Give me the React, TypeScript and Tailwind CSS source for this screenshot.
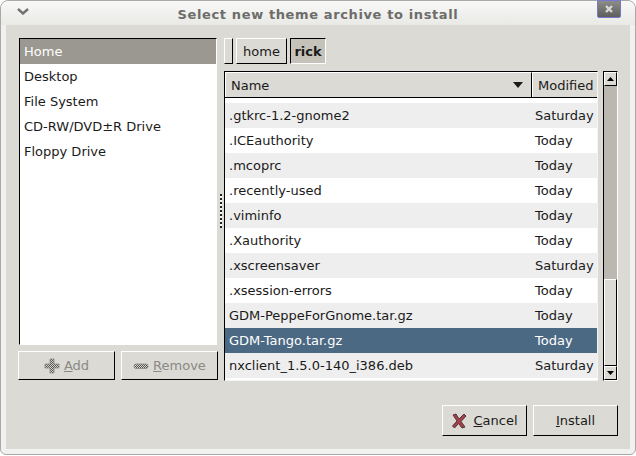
const F = "[font-family:'DejaVu_Sans',sans-serif]";

const rows: [string, string, string][] = [
  [".gtkrc-1.2-gnome2", "Saturday", "odd"],
  [".ICEauthority", "Today", "even"],
  [".mcoprc", "Today", "odd"],
  [".recently-used", "Today", "even"],
  [".viminfo", "Today", "odd"],
  [".Xauthority", "Today", "even"],
  [".xscreensaver", "Saturday", "odd"],
  [".xsession-errors", "Today", "even"],
  ["GDM-PeppeForGnome.tar.gz", "Today", "odd"],
  ["GDM-Tango.tar.gz", "Today", "sel"],
  ["nxclient_1.5.0-140_i386.deb", "Saturday", "odd"],
];

const places = ["Desktop", "File System", "CD-RW/DVD±R Drive", "Floppy Drive"];

function Dither() {
  return (
    <defs>
      <pattern id="dith" width="2" height="2" patternUnits="userSpaceOnUse">
        <rect width="2" height="2" fill="#d8d6d1" />
        <rect width="1" height="1" fill="#55534f" />
        <rect x="1" y="1" width="1" height="1" fill="#55534f" />
      </pattern>
    </defs>
  );
}

function Raised({ className, children }: { className: string; children?: React.ReactNode }) {
  return (
    <div className={"flex items-center justify-center border border-t-white border-l-white border-r-black border-b-black bg-[#dcdad5] " + className}>
      {children}
    </div>
  );
}

export default function App() {
  return (
    <div className="w-[636px] h-[456px] bg-white overflow-hidden font-['DejaVu_Sans',sans-serif] text-[13px] leading-none text-[#1a1a1a]">
      <div className="relative w-full h-[455px] bg-[#f1f1ef] rounded-t-[8px] rounded-b-[6px] border border-[#a9a9a7] flex flex-col">
        <div className="h-[24px] shrink-0 bg-gradient-to-b from-[#f8f8f7] to-[#e9e9e6] rounded-t-[8px] flex items-center justify-center">
          <span className="font-bold text-[13px] text-[#6c6c6a] tracking-[0.62px] pt-[2px]">Select new theme archive to install</span>
        </div>
        <svg className="absolute left-[16px] top-[7px]" width="12" height="7" viewBox="0 0 12 7">
          <path d="M1 1 L6 5.5 L11 1" fill="none" stroke="#73736f" strokeWidth="2.4" />
        </svg>
        <div className="absolute left-[596px] top-[-1px] w-[24px] h-[18px] bg-gradient-to-b from-[#8c8c88] to-[#5f5f5c] border border-[#77c] border-[#6a6a67] rounded-b-[2px] flex items-center justify-center">
          <svg width="10" height="10" viewBox="0 0 10 10">
            <path d="M2 2 L8 8 M8 2 L2 8" stroke="#d8d8d6" strokeWidth="2.4" />
          </svg>
        </div>

        <div className="ml-[5px] mr-[5px] h-[424px] bg-[#dcdad5] flex flex-col pl-[12px] pr-[12px] pt-[13px]">
          <div className="flex h-[343px]">
            <div className="w-[200px] shrink-0 flex flex-col">
              <div className="mx-[1px] h-[307px] bg-white border border-t-black border-l-black border-r-white border-b-white">
                <div className="h-[25px] bg-[#9a9890] text-white flex items-center pl-[4px]">Home</div>
                {places.map((p) => (
                  <div key={p} className="h-[25px] flex items-center pl-[4px]">{p}</div>
                ))}
              </div>
              <div className="flex justify-between mt-[6px]">
                <Raised className="w-[97px] h-[29px] gap-[4px] text-[#8a8984]">
                  <svg width="16" height="16" viewBox="0 0 16 16">
                    <Dither />
                    <path d="M6 1 H10 V6 H15 V10 H10 V15 H6 V10 H1 V6 H6 Z" fill="url(#dith)" stroke="#8a8984" strokeWidth="0.8" strokeLinejoin="round" />
                  </svg>
                  <span><u>A</u>dd</span>
                </Raised>
                <Raised className="w-[97px] h-[29px] gap-[4px] text-[#8a8984]">
                  <svg width="16" height="16" viewBox="0 0 16 16">
                    <rect x="1" y="6" width="14" height="4.5" rx="2" fill="url(#dith)" stroke="#8a8984" strokeWidth="0.8" />
                  </svg>
                  <span><u>R</u>emove</span>
                </Raised>
              </div>
            </div>

            <div className="relative w-[6px] shrink-0">
              <div className="absolute left-[2px] top-[156px] w-[2px] h-[34px] bg-[repeating-linear-gradient(to_bottom,#222_0,#222_2px,#f5f5f5_2px,#f5f5f5_4px)]" />
            </div>

            <div className="w-[394px] shrink-0 flex flex-col">
              <div className="flex h-[26px] gap-[3px]">
                <Raised className="w-[9px] h-[26px]" />
                <Raised className="w-[51px] h-[26px]">home</Raised>
                <div className="w-[36px] h-[26px] flex items-center justify-center font-bold bg-[#c5c2b9] border border-t-black border-l-black border-r-white border-b-white">rick</div>
              </div>

              <div className="flex mt-[7px] h-[310px] gap-[5px]">
                <div className="w-[374px] h-[310px] flex flex-col border border-t-black border-l-black border-r-[#f4f4f2] border-b-[#f4f4f2] bg-white overflow-hidden">
                  <div className="flex h-[26px] shrink-0 border-b border-b-black">
                    <div className="w-[307px] flex items-center justify-between pl-[5px] pr-[8px] border-t border-l border-t-white border-l-white border-r border-r-black bg-[#dcdad5]">
                      <span>Name</span>
                      <svg width="10" height="6" viewBox="0 0 10 6"><path d="M0 0 H10 L5 6 Z" fill="#1a1a1a" /></svg>
                    </div>
                    <div className="flex-1 flex items-center pl-[5px] border-t border-l border-t-white border-l-white bg-[#dcdad5]">Modified</div>
                  </div>
                  <div className="h-[5px] shrink-0 bg-white" />
                  {rows.map(([n, m, k]) => (
                    <div
                      key={n}
                      className={
                        "flex items-center h-[25px] shrink-0 " +
                        (k === "sel" ? "bg-[#4b6983] text-white" : k === "odd" ? "bg-[#eeeeee]" : "bg-white")
                      }
                    >
                      <span className="w-[309px] pl-[4px]">{n}</span>
                      <span className="pl-[1px]">{m}</span>
                    </div>
                  ))}
                </div>

                <div className="w-[15px] h-[310px] flex flex-col bg-[#bab8b0] border border-t-black border-l-black border-r-white border-b-white">
                  <Raised className="w-[13px] h-[14px] shrink-0">
                    <svg width="7" height="4" viewBox="0 0 7 4"><path d="M0 4 H7 L3.5 0 Z" fill="#000" /></svg>
                  </Raised>
                  <div className="flex-1" />
                  <Raised className="w-[13px] h-[87px] shrink-0" />
                  <Raised className="w-[13px] h-[14px] shrink-0">
                    <svg width="7" height="4" viewBox="0 0 7 4"><path d="M0 0 H7 L3.5 4 Z" fill="#000" /></svg>
                  </Raised>
                </div>
              </div>
            </div>
          </div>

          <div className="flex justify-end gap-[6px] mt-[24px]">
            <Raised className="w-[85px] h-[31px] gap-[6px]">
              <svg width="16" height="16" viewBox="0 0 16 16">
                <path d="M2 2 L5 1 L8 6 L13 1 L15 3 L10 8.5 L14 14 L11 15 L7.5 10.5 L3.5 15 L1.5 13 L6 8 Z" fill="#a3414d" stroke="#4a2a2d" strokeWidth="0.9" strokeLinejoin="round" />
              </svg>
              <span><u>C</u>ancel</span>
            </Raised>
            <Raised className="w-[85px] h-[31px]"><span><u>I</u>nstall</span></Raised>
          </div>
        </div>
      </div>
    </div>
  );
}
